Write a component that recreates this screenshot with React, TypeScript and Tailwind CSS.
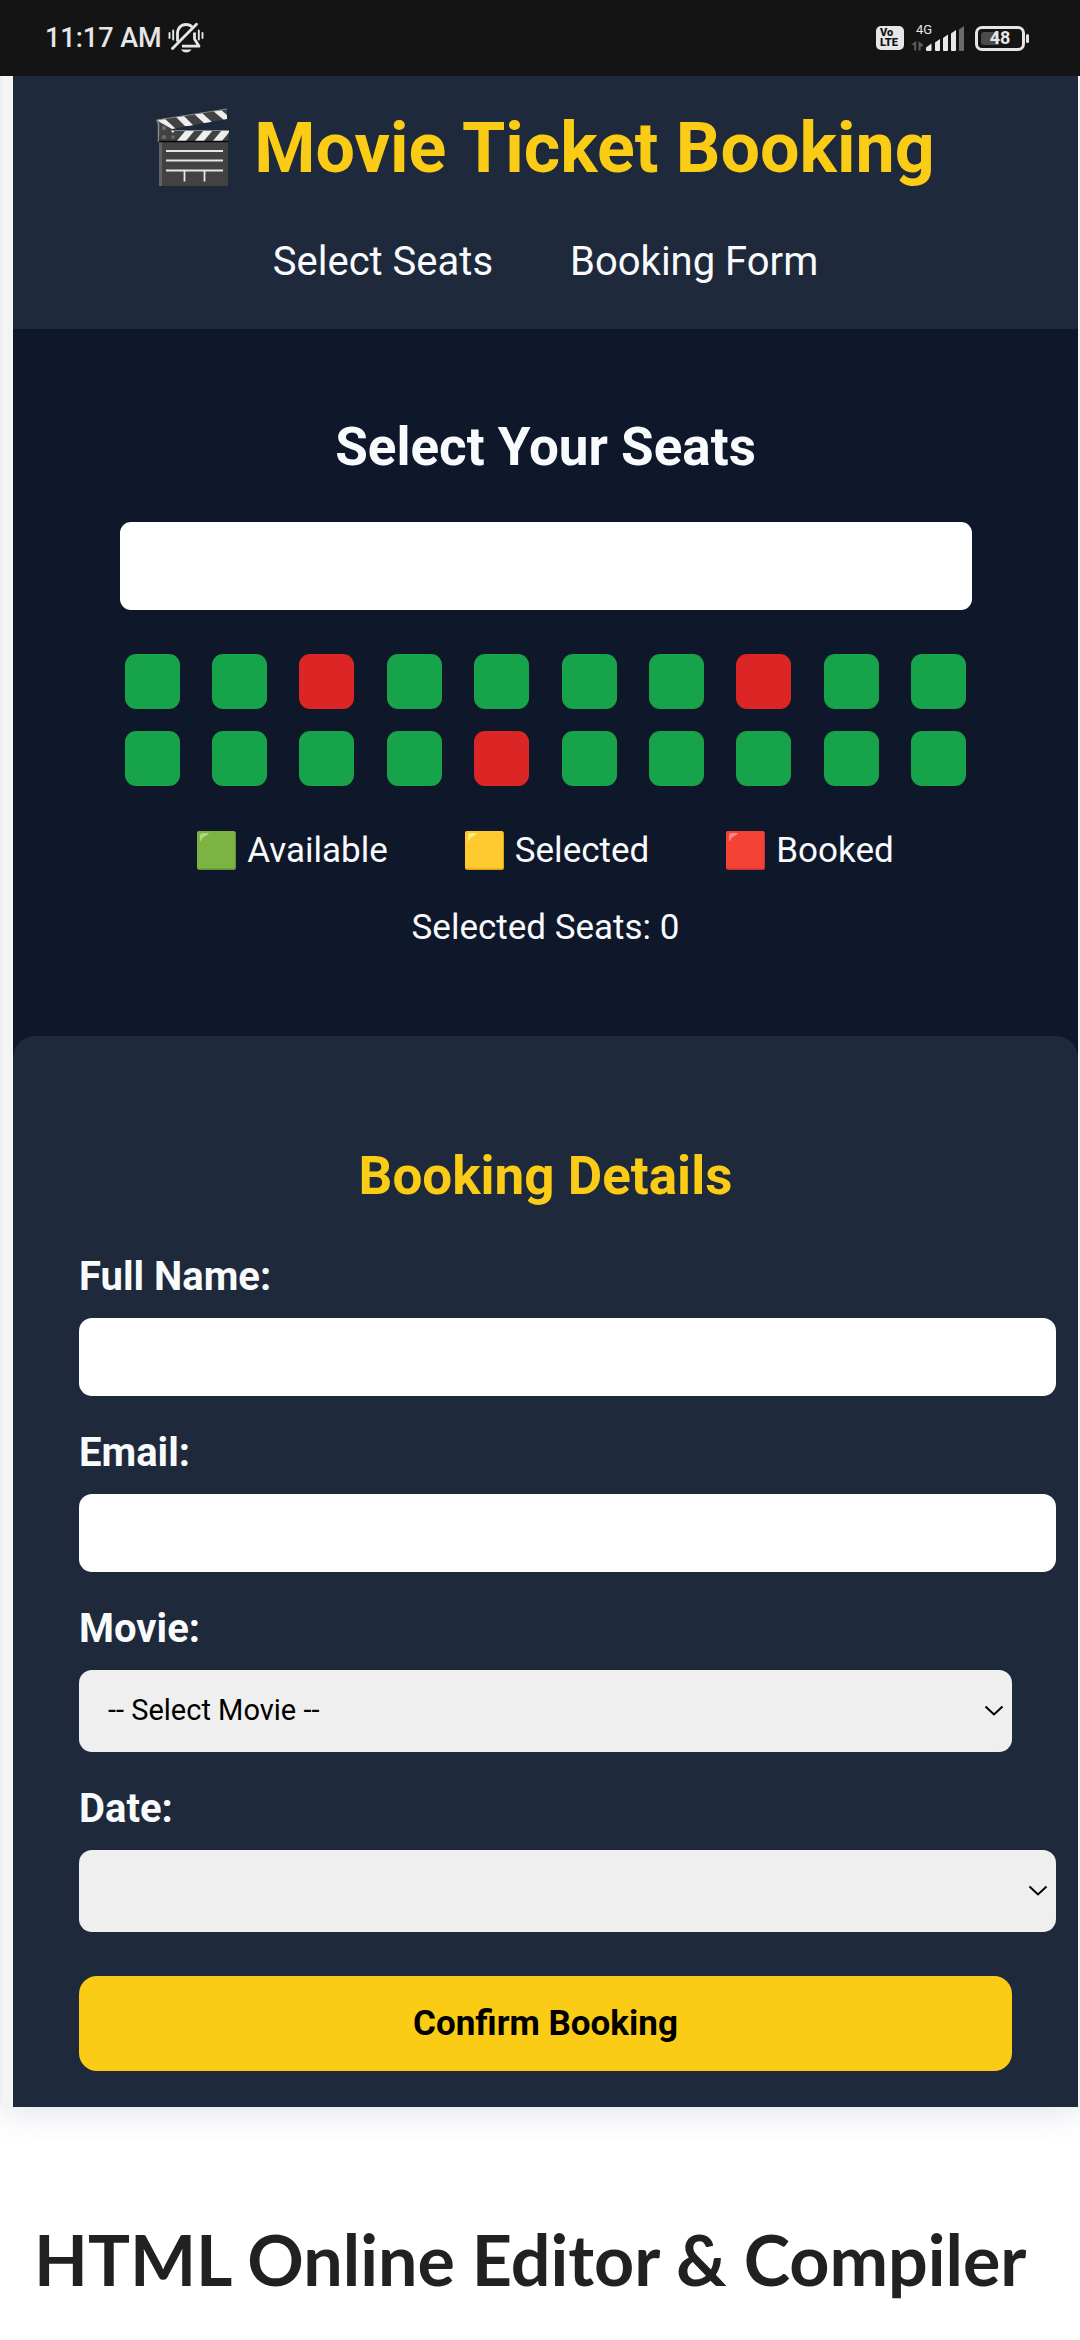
import { useState } from "react";
import type { ReactNode } from "react";

const INITIALLY_BOOKED = [2, 7, 14];
const SEATS = Array.from({ length: 20 }, (_, index) => index);

function MutedBellIcon() {
  return (
    <svg viewBox="0 0 36 32" className="h-8 w-9" fill="none" stroke="#e6e6e6" aria-label="Silent mode" role="img">
      <path d="M9.500 19.500V12C9.500 6 13 2.500 18 2.500c2.600 0 4.800 1 6.300 2.600" strokeWidth="2.800" />
      <path d="M26.500 10.500V17l4.500 7.200H14" strokeWidth="2.800" strokeLinejoin="round" />
      <path d="M4.500 26.500L28.500 2.200" strokeWidth="2.800" strokeLinecap="round" />
      <path d="M13 27.500h10.500c-1.200 2-3 3-5.200 3s-4.200-1-5.300-3z" fill="#e6e6e6" stroke="none" />
      <path d="M1.500 11v5M5.200 8.500v9M30.800 8.500v9M34.500 11v5" strokeWidth="1.900" strokeLinecap="round" />
    </svg>
  );
}

function SignalIcon() {
  return (
    <svg viewBox="0 -4 54 34" className="h-[34px] w-[54px]" aria-label="Mobile signal" role="img">
      <text x="5" y="9" fill="#e6e6e6" fontFamily="Roboto, sans-serif" fontSize="13">
        4G
      </text>
      <path d="M0 20l5.200-4v9.500H3.200V20zM7.500 16v9.500h2V22l3.200-1.500z" fill="#5c5c5c" />
      <path
        d="M15 22.500l5.500-4v6.500q0 1-1 1H16q-1 0-1-1zM24 17.500l5-3.500v11q0 1-1 1h-3q-1 0-1-1zM32 13l5-3.500v15.500q0 1-1 1h-3q-1 0-1-1zM40 8.500l5-3.500v20q0 1-1 1h-3q-1 0-1-1z"
        fill="#e9e9e9"
      />
      <path d="M48 4.500l5-3.500v24q0 1-1 1h-3q-1 0-1-1z" fill="#6b6b6b" />
    </svg>
  );
}

function StatusBar() {
  return (
    <div className="flex h-[76px] items-center justify-between bg-[#141414] pr-[51px] pl-[45px] text-[#e6e6e6]">
      <div className="flex items-center gap-[6px]">
        <span className="text-[27px] leading-8 font-medium">11:17 AM</span>
        <MutedBellIcon />
      </div>
      <div className="flex items-center">
        <div className="flex h-6 w-7 flex-col justify-center rounded-[5px] bg-[#e6e6e6] pl-[4px] text-[11px] leading-[10px] font-black text-[#141414]">
          <span>Vo</span>
          <span>LTE</span>
        </div>
        <div className="ml-[7px]">
          <SignalIcon />
        </div>
        <div className="ml-[10px] flex items-center gap-[1px]">
          <div className="flex h-[25px] w-[50px] rounded-[7px] border-3 border-[#e6e6e6] p-[3px]">
            <div className="flex flex-1 items-center justify-center rounded-[3px] bg-linear-to-r from-[#4b4b4b] from-48% to-[#141414] to-48% text-[18px] leading-4 font-bold">
              48
            </div>
          </div>
          <div className="h-[9px] w-[3px] rounded-full bg-[#e6e6e6]" />
        </div>
      </div>
    </div>
  );
}

function ClapperIcon() {
  return (
    <svg viewBox="0 0 74 80" className="h-20 w-[74px]" aria-hidden="true">
      <defs>
        <clipPath id="clapper-arm">
          <path d="M0 12L71 1v10L16 21z" />
        </clipPath>
        <clipPath id="clapper-bar">
          <path d="M16 22.500H73L72 33.500H3V28z" />
        </clipPath>
      </defs>
      <path d="M3 34h69v44H3z" fill="#424242" />
      <path d="M3 34h3v44H3z" fill="#616161" />
      <path d="M1 12l16 5v6l-1 11H3z" fill="#424242" />
      <path d="M0.500 12l2 3v19" fill="none" stroke="#82868b" strokeWidth="1.500" />
      <g clipPath="url(#clapper-arm)">
        <path d="M0 0h74v24H0z" fill="#424242" />
        <path d="M0 11l8-1 12 11h-9zM19 8l8-1 11 11h-9zM37 5l8-1 12 11h-9zM56 2l8-1 14 12h-9z" fill="#eee" />
      </g>
      <path d="M1 12L71 1" stroke="#82868b" />
      <g clipPath="url(#clapper-bar)">
        <path d="M16 22h58v12H3V28z" fill="#424242" />
        <path d="M30 22h9L29 34h-9zM48 22h9L47 34h-9zM66 22h9L65 34h-9zM14 22h5l-2 3z" fill="#eee" />
      </g>
      <path d="M17 22.500h56" stroke="#82868b" />
      <path d="M3 33.500h69" stroke="#050505" strokeWidth="1.500" />
      <g fill="#6b6f73">
        <circle cx="8" cy="20" r="2" />
        <circle cx="8" cy="29" r="2" />
        <circle cx="17" cy="29" r="1.800" />
      </g>
      <path d="M10 43h57M10 52.500h57M10 62.500h57M28.500 62v11.500M48.500 62v11.500" stroke="#e6e6e6" strokeWidth="1.800" />
    </svg>
  );
}

function SquareIcon({ fill, edge, shine }: { fill: string; edge: string; shine: string }) {
  return (
    <svg viewBox="0 0 39 39" className="h-[39px] w-[39px]" aria-hidden="true">
      <rect width="39" height="39" rx="2.500" fill={edge} />
      <path d="M2 0h34.500q1.500 0 1.500 1.500V36q0 1.500-1.500 1.500H2Q0 37.500 0 36V2Q0 0 2 0z" fill={fill} />
      <path d="M3 10.500V5q0-3 3-3h6q-1 2-3.500 3T5 8q-1 1.500-2 2.500z" fill={shine} />
    </svg>
  );
}

function ChevronIcon() {
  return (
    <svg
      viewBox="0 0 20 12"
      className="pointer-events-none absolute top-1/2 right-2 h-3 w-5 -translate-y-1/2"
      fill="none"
      stroke="#000"
      strokeWidth="2"
      aria-hidden="true"
    >
      <path d="M1.500 1.500L10 9.500L18.500 1.500" />
    </svg>
  );
}

function Field({ id, label, children }: { id: string; label: string; children: ReactNode }) {
  return (
    <div>
      <label htmlFor={id} className="mb-[18px] block text-[40px] leading-[46px] font-bold">
        {label}
      </label>
      {children}
    </div>
  );
}

const LEGEND = [
  { label: "Available", fill: "#7cb342", edge: "#5f9634", shine: "#aed581" },
  { label: "Selected", fill: "#ffca2f", edge: "#e6a010", shine: "#fff176" },
  { label: "Booked", fill: "#f44336", edge: "#c93434", shine: "#ff8a80" },
];

export default function App() {
  const [selected, setSelected] = useState<number[]>([]);

  const toggle = (seat: number) =>
    setSelected((current) =>
      current.includes(seat) ? current.filter((item) => item !== seat) : [...current, seat],
    );

  return (
    <div className="min-h-screen bg-white font-[Roboto,sans-serif] text-[#f8fafc]">
      <StatusBar />
      <div className="rounded-b-lg border-l-2 border-[#eeeeee] bg-[#f4f4f4] pr-[2px] pl-[11px] shadow-[0_8px_30px_rgba(60,70,130,0.13)]">
        <div className="bg-[#0f172a]">
          <header className="bg-[#1e293b] px-11 pt-[31px] pb-[43px]">
            <h1 className="flex items-center justify-center gap-6 text-[70px] leading-[82px] font-bold text-[#facc15]">
              <ClapperIcon />
              Movie Ticket Booking
            </h1>
            <nav className="mt-[49px] flex justify-center gap-[77px] text-[40px] leading-[48px]">
              <a href="#seats">Select Seats</a>
              <a href="#booking">Booking Form</a>
            </nav>
          </header>

          <section id="seats" className="flex flex-col items-center pt-[88px] pb-[88px]">
            <h2 className="text-[53px] leading-[61px] font-bold">Select Your Seats</h2>
            <div className="mt-11 h-[88px] w-4/5 rounded-[11px] bg-white" />
            <div className="mt-11 grid w-4/5 grid-cols-10 justify-items-center gap-[22px]">
              {SEATS.map((seat) => {
                const booked = INITIALLY_BOOKED.includes(seat);
                const color = booked
                  ? "bg-[#dc2626]"
                  : selected.includes(seat)
                    ? "bg-[#facc15]"
                    : "bg-[#16a34a]";
                return (
                  <button
                    key={seat}
                    type="button"
                    aria-label={`Seat ${seat + 1}`}
                    aria-pressed={selected.includes(seat)}
                    disabled={booked}
                    onClick={() => toggle(seat)}
                    className={`h-[55px] w-[55px] rounded-[11px] ${color}`}
                  />
                );
              })}
            </div>
            <ul className="mt-11 flex gap-[77px] text-[35px] leading-[41px]">
              {LEGEND.map((item) => (
                <li key={item.label} className="flex items-center gap-[11px]">
                  <SquareIcon fill={item.fill} edge={item.edge} shine={item.shine} />
                  {item.label}
                </li>
              ))}
            </ul>
            <p className="mt-9 text-[35px] leading-[41px]">Selected Seats: {selected.length}</p>
          </section>

          <section id="booking" className="rounded-t-[22px] bg-[#1e293b] px-[66px] pt-[110px] pb-9">
            <h2 className="text-center text-[53px] leading-[61px] font-bold text-[#facc15]">Booking Details</h2>
            <form className="mt-[47px] flex flex-col gap-[34px]" onSubmit={(event) => event.preventDefault()}>
              <Field id="name" label="Full Name:">
                <div className="-mr-11">
                  <input
                    id="name"
                    type="text"
                    className="block h-[78px] w-full rounded-[13px] bg-white px-[26px] text-[29px] text-black"
                  />
                </div>
              </Field>
              <Field id="email" label="Email:">
                <div className="-mr-11">
                  <input
                    id="email"
                    type="email"
                    className="block h-[78px] w-full rounded-[13px] bg-white px-[26px] text-[29px] text-black"
                  />
                </div>
              </Field>
              <Field id="movie" label="Movie:">
                <div className="relative">
                  <select
                    id="movie"
                    className="block h-[82px] w-full appearance-none rounded-[13px] bg-[#efefef] px-[29px] text-[29px] text-black"
                  >
                    <option>-- Select Movie --</option>
                  </select>
                  <ChevronIcon />
                </div>
              </Field>
              <Field id="date" label="Date:">
                <div className="relative -mr-11">
                  <select
                    id="date"
                    className="block h-[82px] w-full appearance-none rounded-[13px] bg-[#efefef] px-[29px] text-[29px] text-black"
                  >
                    <option aria-label="No date" />
                  </select>
                  <ChevronIcon />
                </div>
              </Field>
              <button
                type="submit"
                className="mt-[10px] h-[95px] rounded-[18px] bg-[#facc15] text-[35px] leading-[41px] font-bold text-black"
              >
                Confirm Booking
              </button>
            </form>
          </section>
        </div>
      </div>
      <h2 className="px-[34px] pt-[110px] font-[Lato,sans-serif] text-[70px] leading-[84px] font-bold text-[#212121]">
        HTML Online Editor &amp; Compiler
      </h2>
    </div>
  );
}
